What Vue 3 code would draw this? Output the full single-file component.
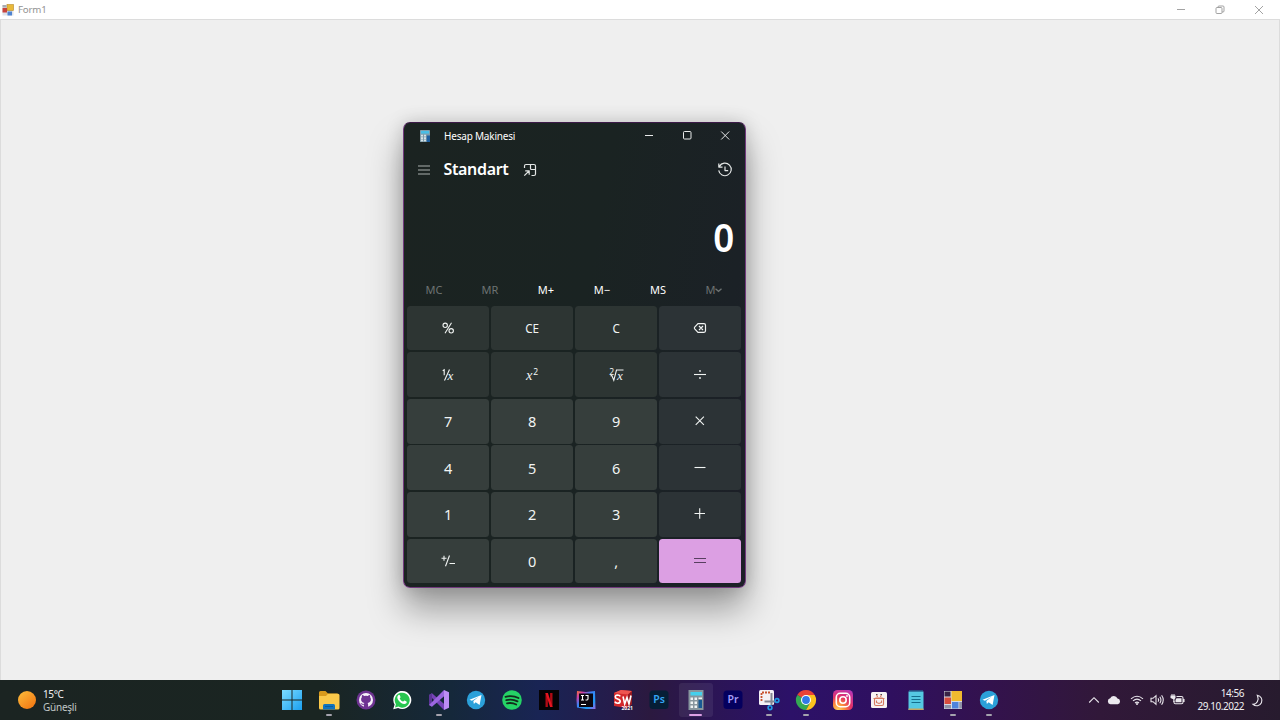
<script setup>
const memory = [
  { t: 'MC', off: true }, { t: 'MR', off: true }, { t: 'M+' },
  { t: 'M−' }, { t: 'MS' }, { t: 'M', off: true, chevron: true },
]
const keys = [
  { k: 'percent', c: 'fn' }, { t: 'CE', c: 'fn small' }, { t: 'C', c: 'fn small' }, { k: 'back', c: 'op' },
  { k: 'inv', c: 'fn' }, { k: 'sq', c: 'fn' }, { k: 'root', c: 'fn' }, { k: 'div', c: 'op' },
  { t: '7', c: 'num' }, { t: '8', c: 'num' }, { t: '9', c: 'num' }, { k: 'mul', c: 'op' },
  { t: '4', c: 'num' }, { t: '5', c: 'num' }, { t: '6', c: 'num' }, { k: 'sub', c: 'op' },
  { t: '1', c: 'num' }, { t: '2', c: 'num' }, { t: '3', c: 'num' }, { k: 'add', c: 'op' },
  { k: 'neg', c: 'num' }, { t: '0', c: 'num' }, { t: ',', c: 'num' }, { k: 'eq', c: 'eq' },
]
const apps = [
  { id: 'start' }, { id: 'files', run: true }, { id: 'github' }, { id: 'whatsapp' }, { id: 'vs', run: true },
  { id: 'telegram' }, { id: 'spotify' }, { id: 'netflix' }, { id: 'idea' }, { id: 'sw' }, { id: 'ps' },
  { id: 'calc', active: true }, { id: 'pr' }, { id: 'snip', run: true }, { id: 'chrome', run: true },
  { id: 'insta' }, { id: 'box' }, { id: 'notes' }, { id: 'form', run: true }, { id: 'telegram', run: true },
]
</script>

<template>
  <div class="screen">
    <header class="formbar">
      <svg class="formicon" width="12" height="12" viewBox="0 0 12 12">
        <rect x=".5" y="1" width="11" height="10.5" fill="#dfe3ea" />
        <rect x="5" y=".5" width="6.500" height="6" fill="#e9b93a" stroke="#b98c2c" stroke-width=".6" />
        <rect x=".5" y="4" width="4.500" height="4.500" fill="#c8433c" />
        <rect x="5.500" y="7.500" width="4.500" height="4" fill="#4f83d0" />
        <path d="M.5 1h4v2.500h-4z" fill="#a8abb2" />
      </svg>
      <span class="formname">Form1</span>
      <div class="formctl">
        <svg viewBox="0 0 12 12"><path d="M2 5.500h8" /></svg>
        <svg viewBox="0 0 12 12"><rect x="2" y="3.500" width="6" height="6" rx="1" /><path d="M4 3.500V3q0-1 1-1h4q1 0 1 1v4q0 1-1 1H8" /></svg>
        <svg viewBox="0 0 12 12"><path d="M2 2l8 8M10 2l-8 8" /></svg>
      </div>
    </header>

    <main class="form">
      <section class="calc">
        <div class="cbar">
          <svg class="cicon" width="10" height="12" viewBox="0 0 10 12">
            <rect width="10" height="12" rx=".6" fill="#7f9dab" /><rect x="1" y="1" width="8" height="2.600" fill="#48bfe6" />
            <path d="M1 4.800h2v1.800H1zM4 4.800h2v1.800H4zM1 7.200h2V9H1zM4 7.200h2V9H4zM1 9.600h2v1.600H1zM4 9.600h2v1.600H4z" fill="#d5e3e8" /><path d="M6.700 5.500H10V12H6.700z" fill="#1e609f" />
          </svg>
          <span>Hesap Makinesi</span>
          <div class="cctl">
            <svg viewBox="0 0 12 12"><path d="M2 5.500h8" /></svg>
            <svg viewBox="0 0 12 12"><rect x="2.500" y="1.500" width="7.500" height="7.500" rx="1" /></svg>
            <svg viewBox="0 0 12 12"><path d="M2.200 1.500l8 8M10.200 1.500l-8 8" /></svg>
          </div>
        </div>
        <div class="chead">
          <svg class="menu" width="14" height="12" viewBox="0 0 14 12"><path d="M1 2h12M1 6h12M1 10h12" /></svg>
          <h1>Standart</h1>
          <svg class="pin" width="14" height="14" viewBox="0 0 14 14"><path d="M1.500 5V3q0-1.500 1.500-1.500h8q1.500 0 1.500 1.500v8q0 1.500-1.500 1.500H8.500M7.500 1.500v4q0 1 1 1h4M1.300 12.700L6 8M2.200 7.800H6.200v4" /></svg>
          <svg class="hist" width="16" height="16" viewBox="0 0 16 16"><path d="M2.400 4.400A6.300 6.300 0 1 1 1.700 8.400M1.800 1.600v3.500h3.700M8 4.600v4h3.200" /></svg>
        </div>
        <div class="result"><span>0</span></div>
        <div class="memory">
          <span v-for="m in memory" :key="m.t + m.off" :class="{ off: m.off }">{{ m.t }}<svg v-if="m.chevron" width="7" height="6" viewBox="0 0 7 6"><path d="M.5 1.700l3 2.600L6.500 1.700" /></svg></span>
        </div>
        <div class="keys">
          <div v-for="(b, i) in keys" :key="i" class="key" :class="b.c">
            <template v-if="b.t">{{ b.t }}</template>
            <svg v-else-if="b.k === 'percent'" viewBox="0 0 20 20"><circle cx="7.200" cy="7.300" r="2.200" /><circle cx="13.200" cy="12.800" r="2.200" /><path d="M13.500 4.800L7 15.200" /></svg>
            <svg v-else-if="b.k === 'back'" viewBox="0 0 20 20"><path stroke-width="1.200" d="M8 5.700h6q1.500 0 1.500 1.500v5.600q0 1.500-1.500 1.500H8L4.700 10.800q-.7-.8 0-1.600zM9 8l4 4M13 8l-4 4" /></svg>
            <svg v-else-if="b.k === 'inv'" viewBox="0 0 20 20"><path d="M4.700 5.700L6.200 4.700v5.600M11.500 4.500L6.500 15.500" /><text x="9.500" y="15" class="math mid">x</text></svg>
            <svg v-else-if="b.k === 'sq'" viewBox="0 0 20 20"><text x="4" y="15" class="math big">x</text><text x="11.300" y="9.500" class="sup">2</text></svg>
            <svg v-else-if="b.k === 'root'" viewBox="0 0 20 20"><text x="3.300" y="9.500" class="sup">2</text><path d="M4.500 11l1.300-.5 2 4.800L10.500 5h7" /><text x="11" y="14.800" class="math mid">x</text></svg>
            <svg v-else-if="b.k === 'div'" viewBox="0 0 20 20"><path d="M4 9.500h12" /><circle cx="10" cy="6" r=".9" class="dot" /><circle cx="10" cy="13" r=".9" class="dot" /></svg>
            <svg v-else-if="b.k === 'mul'" viewBox="0 0 20 20"><path d="M5.700 5.700l8.200 8.200M13.900 5.700l-8.200 8.200" /></svg>
            <svg v-else-if="b.k === 'sub'" viewBox="0 0 20 20"><path d="M4.500 9.500h11" /></svg>
            <svg v-else-if="b.k === 'add'" viewBox="0 0 20 20"><path d="M4.500 9.500h10.500M9.700 4.300v10.500" /></svg>
            <svg v-else-if="b.k === 'neg'" viewBox="0 0 20 20"><path d="M3.500 7.200h5M6 4.700v5M11.500 4.500L7.500 15.200M11.500 12.500h5.500" /></svg>
            <svg v-else viewBox="0 0 20 20"><path d="M4 7.500h12M4 11.500h12" /></svg>
          </div>
        </div>
      </section>
    </main>

    <footer class="taskbar">
      <div class="weather">
        <i class="sun"></i>
        <div><p class="deg">15°C</p><p class="sky">Güneşli</p></div>
      </div>

      <nav class="apps">
        <div v-for="(a, i) in apps" :key="i" class="app" :class="{ run: a.run, active: a.active }">
          <svg v-if="a.id === 'start'" viewBox="0 0 24 24">
            <defs><linearGradient id="gw" x1="0" y1="0" x2="1" y2="1"><stop stop-color="#7ddcff" /><stop offset="1" stop-color="#1a9ff0" /></linearGradient></defs>
            <path fill="url(#gw)" d="M2 2h9.500v9.500H2zM12.500 2H22v9.500h-9.500zM2 12.500h9.500V22H2zM12.500 12.500H22V22h-9.500z" />
          </svg>
          <svg v-else-if="a.id === 'files'" viewBox="0 0 24 24">
            <path d="M2 4.500Q2 3 3.500 3h5L11 5.500h9q1.500 0 1.500 1.500v3H2z" fill="#d99a1c" />
            <path d="M2 8h7l2-2.200h10q1.500 0 1.500 1.500V20q0 1.500-1.500 1.500H3.500Q2 21.500 2 20z" fill="#fbc94a" />
            <path d="M6 21.500v-4q0-1.500 1.500-1.500h9q1.500 0 1.500 1.500v4z" fill="#1273bd" /><path d="M8 18.500h8" stroke="#0b5b9b" stroke-width="1" />
          </svg>
          <svg v-else-if="a.id === 'github'" viewBox="0 0 24 24">
            <circle cx="12" cy="12" r="9.500" fill="#6e3392" />
            <circle cx="12" cy="12" r="7" fill="#f7f2fa" />
            <path fill="#6e3392" d="M9.900 19v-2.200c-2.400.4-2.900-1.200-3.500-1.800 1.600-.2 1.700 1.400 3.500.8l.5-.9C7.900 14.500 7 13 7.100 11q.1-1.100.8-1.800-.3-1.100.2-2.200 1.100.1 2.200.9 1.700-.4 3.400 0 1.100-.8 2.200-.9.500 1.100.2 2.200.7.700.8 1.800c.1 2-.8 3.500-3.300 3.900q.5.700.5 1.600V19z" />
          </svg>
          <svg v-else-if="a.id === 'whatsapp'" viewBox="0 0 24 24">
            <path d="M3.200 21.300l1.400-4.700a9 9 0 1 1 3.500 3.300z" fill="#fff" /><path d="M5 19.400l.9-3.200a7.500 7.500 0 1 1 2.500 2.400z" fill="#28c650" />
            <path d="M8.300 7.200c.8-.7 1.300-.4 1.600.4l.6 1.400c.2.5-.5 1-.8 1.400.8 1.700 1.800 2.500 3.500 3.200.5-.4 1-1.300 1.500-1.100l1.700.9c.6.300.4 1.200-.1 1.800-2.100 2-6-.3-7.700-2.700C7 10.400 6.900 8.500 8.300 7.200z" fill="#fff" />
          </svg>
          <svg v-else-if="a.id === 'vs'" viewBox="0 0 24 24">
            <path d="M2 7l3-1.800L18.300 17 17 22z" fill="#7643b8" /><path d="M2 7v10l3 1.800V5.200z" fill="#5d3698" /><path d="M2 17l3 1.800L18.500 7 17 2z" fill="#9b66df" />
            <path d="M17 2l5 2.200v15.600L17 22z" fill="#bd8cf4" />
          </svg>
          <svg v-else-if="a.id === 'telegram'" viewBox="0 0 24 24">
            <circle cx="12" cy="12" r="9.200" fill="#2ba0d9" />
            <path d="M5.500 11.800L17.500 7 15.600 17l-4-2.800-1.700 1.900-.6-3.200 5.200-3.800-6.600 3.700z" fill="#fff" />
          </svg>
          <svg v-else-if="a.id === 'spotify'" viewBox="0 0 24 24">
            <circle cx="12" cy="12" r="9.800" fill="#25d366" /><path d="M5.500 8.800q7-2 13 1.200M6.300 12.200q6-1.500 11.200 1.200M7 15.400q5-1.200 9.200 1.100" fill="none" stroke="#142c1c" stroke-width="1.800" stroke-linecap="round" />
          </svg>
          <svg v-else-if="a.id === 'netflix'" viewBox="0 0 24 24">
            <path d="M2 2h20v20H2z" fill="#050305" /><path d="M8.500 5h2.400v14H8.500zM13.100 5h2.400v14h-2.400z" fill="#b00a14" /><path d="M8.500 5h2.400l4.600 14h-2.400z" fill="#e51520" />
          </svg>
          <svg v-else-if="a.id === 'idea'" viewBox="0 0 24 24">
            <defs><linearGradient id="gi" x1="0" y1="0" x2="1" y2="1"><stop stop-color="#f5792f" /><stop offset=".2" stop-color="#cf3fa5" /><stop offset=".42" stop-color="#3b82f6" /><stop offset=".75" stop-color="#1e9bf5" /><stop offset="1" stop-color="#9a62e0" /></linearGradient></defs>
            <path d="M3 3l9 1 9-1 .5 18H12l-9-1.500L2.500 12z" fill="url(#gi)" /><path d="M5 5.500h14v13.500H5z" fill="#0b0710" />
            <path d="M7 7.500h3M8.500 7.500v4.500M7 12h3M11.500 7.500H14v3.300q0 1.200-1 1.200H11.500M7 16.500h5" stroke="#fff" stroke-width="1.100" fill="none" />
          </svg>
          <svg v-else-if="a.id === 'sw'" viewBox="0 0 24 24">
            <path d="M3 5l7-3 11 1v13l-5 4-13-2z" fill="#d3292c" /><path d="M3 5l7-3 11 1-4 3.500z" fill="#ee5550" /><path d="M17 6.500L21 3v13l-5 4z" fill="#951b22" />
            <path d="M9.300 8.300Q8.500 7 6.500 7 4.300 7.200 4.300 9q0 1.400 2.500 2.100 2.400.6 2.400 2.300-.1 1.800-2.600 1.900Q4.500 15.200 3.800 13.700M12 8.500l1.700 7.500 2.300-6.500 2 6.500 2-8.500" fill="none" stroke="#fff" stroke-width="1.600" />
            <text x="10.500" y="21.900" class="swyear">2021</text>
          </svg>
          <svg v-else-if="a.id === 'ps'" viewBox="0 0 24 24"><rect x="2.500" y="2.500" width="19" height="18.500" rx="3.500" fill="#061e36" /><text x="12" y="15.300" class="adobe psc">Ps</text></svg>
          <svg v-else-if="a.id === 'calc'" viewBox="0 0 24 24">
            <path d="M4.500 2h15v20h-15z" fill="#87969e" /><path d="M6.500 4h11.500v3.500H6.500z" fill="#45d0ec" />
            <path d="M6.500 9.500H9V12H6.500zM10.500 9.500H13V12h-2.500zM14.500 9.500H18V11h-3.500zM6.500 13.500H9V16H6.500zM10.500 13.500H13V16h-2.500zM6.500 17.500H9V20H6.500zM10.500 17.500H13V20h-2.500z" fill="#eef3f4" /><path d="M14.500 12H18v8h-3.500z" fill="#185a94" />
          </svg>
          <svg v-else-if="a.id === 'pr'" viewBox="0 0 24 24"><rect x="2.500" y="2.500" width="19" height="18.500" rx="3.500" fill="#05005e" /><text x="12" y="15.300" class="adobe prc">Pr</text></svg>
          <svg v-else-if="a.id === 'snip'" viewBox="0 0 24 24">
            <rect x="2" y="2" width="15" height="15" rx="1.500" fill="#f4f1f5" /><path d="M4.500 13V4.500H13.500" stroke="#c9532f" stroke-width="1.800" stroke-dasharray="2 1" fill="none" />
            <path d="M14.500 5v12M7.500 13.500h10.500" stroke="#858792" stroke-width="2" /><g fill="none" stroke="#229be6" stroke-width="1.600"><circle cx="20" cy="12.500" r="1.900" /><circle cx="13" cy="19.700" r="1.900" /></g>
          </svg>
          <svg v-else-if="a.id === 'chrome'" viewBox="0 0 24 24">
            <path d="M12 12L3.300 7A10 10 0 0 1 20.700 7z" fill="#e94335" /><path d="M12 12l4.300 2.500L12 22A10 10 0 0 1 3.300 7z" fill="#34a853" />
            <path d="M12 7h8.700A10 10 0 0 1 12 22l4.300-7.500z" fill="#fcc31e" /><circle cx="12" cy="12" r="5" fill="#fff" /><circle cx="12" cy="12" r="3.900" fill="#3179e8" />
          </svg>
          <svg v-else-if="a.id === 'insta'" viewBox="0 0 24 24">
            <defs><radialGradient id="gn" cx=".25" cy="1" r="1.150"><stop stop-color="#ffd45e" /><stop offset=".3" stop-color="#f98a3b" /><stop offset=".58" stop-color="#e43066" /><stop offset="1" stop-color="#b637b9" /></radialGradient></defs>
            <rect x="2" y="2" width="20" height="20" rx="4.500" fill="url(#gn)" /><g fill="none" stroke="#fff" stroke-width="1.600"><rect x="5.300" y="5.300" width="13.400" height="13.400" rx="4" /><circle cx="12" cy="12" r="3.200" /></g><circle cx="16" cy="8" r=".9" fill="#fff" />
          </svg>
          <svg v-else-if="a.id === 'box'" viewBox="0 0 24 24">
            <rect x="4" y="4" width="16" height="16" rx="1.500" fill="#f7f3f3" /><g fill="none" stroke="#d77b61" stroke-width="1.100"><rect x="7.500" y="10" width="9" height="7.500" rx="1.500" /><path d="M6.500 10.500h11M9.500 12.500v2l2.500 1 2.500-1v-2M10.500 9L9.500 6.500M13.500 9l1-2.500" /><path d="M9 6.500h1.500M13.500 6.500H15" stroke="#4b4b52" /></g>
          </svg>
          <svg v-else-if="a.id === 'notes'" viewBox="0 0 24 24">
            <path d="M4.500 3.500h15V22h-15z" fill="#55c9e2" /><path d="M4.500 20.500h15V22h-15z" fill="#c6a65f" /><path d="M5.500 3h13" stroke="#2289a8" stroke-width="2" stroke-dasharray="1 1" /><path d="M7.500 8.500h9M7.500 11.500h9M7.500 14.500h9" stroke="#156f8d" stroke-width="1.200" />
          </svg>
          <svg v-else viewBox="0 0 24 24">
            <path d="M3 3h18v18H3z" fill="#d6dae4" /><path d="M3.500 3.500h6v5h-6z" fill="#392244" /><path d="M10.500 3H21v10H10.500z" fill="#f1b92f" /><path d="M3.500 9.500H10V16H3.500z" fill="#d84d3e" /><path d="M11 14h6.500v6.500H11z" fill="#4f83dd" /><path d="M3.500 17H10v3.500H3.500zM18.300 14H21v6.500h-2.700z" fill="#8f93a8" />
          </svg>
        </div>
      </nav>

      <div class="tray">
        <svg width="12" height="12" viewBox="0 0 12 12"><path d="M1.200 8.500L6 3.700l4.800 4.800" /></svg>
        <svg class="cloud" width="14" height="12" viewBox="0 0 14 12"><path class="solid" d="M3.500 10.200a3 3 0 0 1-.3-5.900A4 4 0 0 1 10.500 4.500a2.900 2.900 0 0 1 .3 5.700z" /></svg>
        <svg class="wifi" width="14" height="12" viewBox="0 0 14 12"><path d="M1 4.800q6-5.200 12 0M3 6.900q4-3.500 8 0M5 9q2-1.800 4 0" /><circle class="solid" cx="7" cy="10" r="1" /></svg>
        <svg class="vol" width="14" height="12" viewBox="0 0 14 12"><path d="M1 4.300h2L6 1.700v8.600L3 7.700H1zM8 4.300q1.300 1.700 0 3.400M9.800 2.800q2.300 3.200 0 6.400M11.600 1.300q3.300 4.700 0 9.400" /></svg>
        <svg class="bat" width="15" height="12" viewBox="0 0 15 12"><path d="M6.500 2.500h5q1.500 0 1.500 1.500v4.300q0 1.500-1.500 1.500h-6Q4 9.800 4 8.300V7M14 5v3" /><path class="solid" d="M6.500 4.300h5v4h-6V6zM.5 1.500h1V0h1v1.500h1V0h1v1.500H5.500V4L4.500 5.200V8h-1.200V5.200L.5 4z" /></svg>
        <div class="clock"><p>14:56</p><p>29.10.2022</p></div>
        <svg class="moon" width="13" height="13" viewBox="0 0 13 13"><path d="M6.300 1.200A5.300 5.300 0 1 1 2 10.300C6 10.300 8.300 5.800 6.300 1.200z" /></svg>
      </div>
    </footer>
  </div>
</template>

<style>
body { margin: 0; overflow: hidden; }
</style>

<style scoped>
* { box-sizing: border-box; }
p, h1 { margin: 0; }
.screen { width: 1280px; height: 720px; display: flex; flex-direction: column; overflow: hidden; font-family: "Noto Sans", "Open Sans", sans-serif; }
svg { flex: none; display: block; fill: none; }
.formbar { height: 19px; background: #fff; display: flex; align-items: center; padding-left: 2px; flex: none; }
.formname { margin-left: 4px; font-size: 9.700px; letter-spacing: -.2px; color: #929292; line-height: 19px; }
.formctl { margin-left: auto; display: flex; gap: 27px; padding-right: 15.500px; }
.formctl svg { width: 12px; height: 12px; stroke: #999; stroke-width: .9; }
.form { flex: 1; background: #efefef; border: 1px solid #dcdcdc; border-bottom: 0; padding: 102px 0 0 402px; }
.calc { width: 342.500px; height: 465.500px; border: 1px solid #71397d; border-top-color: #3c1a48; border-radius: 7px; background: linear-gradient(100deg, #1b2321 0%, #1a2322 50%, #1b2126 85%, #1d1f28 100%); box-shadow: 0 22px 34px rgba(0,0,0,.34), 0 0 18px rgba(0,0,0,.17); display: flex; flex-direction: column; color: #fff; padding: 0 3px; }
.cbar { height: 26px; display: flex; align-items: center; padding-left: 13px; font-size: 10px; flex: none; }
.cbar span { margin-left: 14px; letter-spacing: -.2px; }
.cctl { margin-left: auto; display: flex; gap: 26px; padding-right: 10.500px; }
.cctl svg { width: 12px; height: 12px; stroke: #e8eaea; stroke-width: 1; }
.chead { height: 41px; display: flex; align-items: center; padding: 0 8.500px 0 10px; flex: none; }
.chead svg { stroke: #e3e6e5; stroke-width: 1.200; stroke-linejoin: round; }
.chead .menu { stroke: #aab0ae; stroke-width: 1; position: relative; top: .5px; }
h1 { margin-left: 12.500px; font-size: 16px; line-height: 22px; font-weight: 600; letter-spacing: -.35px; width: 67px; white-space: nowrap; position: relative; top: -.7px; }
.chead .pin { margin-left: 12.500px; }
.hist { margin-left: auto; }
.result { height: 84px; text-align: right; font-size: 39px; line-height: 94px; font-weight: 600; padding-right: 7.500px; flex: none; }
.result span { display: inline-block; transform: scaleX(.94); transform-origin: right; }
.memory { height: 31px; display: grid; grid-template-columns: repeat(6, 56px); align-items: center; text-align: center; font-size: 11px; line-height: 31px; flex: none; margin-left: -1px; }
.memory span { display: flex; justify-content: center; align-items: center; }
.memory .off { color: #6d7373; }
.memory svg { stroke: #6d7373; stroke-width: 1.300; }
.keys { height: 278px; display: grid; grid-template-columns: repeat(4, 1fr); grid-template-rows: repeat(6, 1fr); gap: 1.700px; margin-top: .5px; margin-right: .3px; }
.key { border-radius: 3.500px; display: flex; align-items: center; justify-content: center; font-size: 14.500px; color: #f1f4f3; }
.key svg { width: 20px; height: 20px; stroke: currentColor; stroke-width: 1.100; overflow: visible; }
.num { background: #363e3c; }
.fn { background: #2d3533; }
.op { background: #2c3336; }
.small { font-size: 11.700px; }
.eq { background: #dc9fe3; color: #583e60; }
.math { font: italic 11px "Liberation Serif", serif; fill: currentColor; stroke: none; }
.mid { font-size: 13px; }
.big { font-size: 14.500px; }
.sup { font-size: 8.500px; fill: currentColor; stroke: none; }
.dot { fill: currentColor; stroke: none; }

.taskbar { height: 40px; flex: none; display: flex; background: linear-gradient(90deg, #1b2422 0, #1a2522 320px, #15283a 450px, #192454 540px, #251c4b 610px, #2b193f 650px, #2b1554 710px, #2c1168 790px, #2f105f 890px, #33124d 990px, #311839 1100px, #271b2e 1280px); color: #f0f0f2; }
.weather { width: 274px; display: flex; align-items: center; padding-left: 18px; flex: none; font-size: 10px; line-height: 13px; }
.weather > div { margin-left: 7px; padding-top: 1px; }
.deg { letter-spacing: -.4px; }
.sky { color: #c1c7c6; letter-spacing: -.25px; }
.sun { width: 18px; height: 18px; border-radius: 50%; background: linear-gradient(140deg, #fbbd3c, #f2700e); }
.apps { display: flex; align-items: center; flex: none; }
.app { width: 36.700px; height: 40px; display: flex; align-items: center; justify-content: center; position: relative; }
.app svg { width: 24px; height: 24px; position: relative; }
.app.run::after { content: ""; position: absolute; width: 6px; height: 2px; bottom: 4.500px; left: 15.300px; border-radius: 1px; background: #a5a3ad; }
.app.active::before { content: ""; position: absolute; inset: 3px 1.500px 3px; border-radius: 3px; background: #fff; opacity: .07; }
.app.active::after { content: ""; position: absolute; width: 13px; height: 2.500px; bottom: 4px; left: 11.800px; border-radius: 1.500px; background: #dda0e6; }
.swyear { font-weight: 700; font-size: 5px; fill: #fff; }
.adobe { font-weight: 600; font-size: 10.500px; text-anchor: middle; }
.psc { fill: #35a6f5; }
.prc { fill: #a39bf7; }
.tray { margin-left: auto; display: flex; align-items: center; padding-right: 16px; }
.tray svg { stroke: #e9e6ec; stroke-width: 1.100; }
.tray .solid { fill: #ece9ee; stroke: none; }
.cloud { margin-left: 7px; }
.wifi { margin-left: 9px; }
.vol { margin-left: 6px; }
.bat { margin-left: 6px; }
.clock { width: 52px; margin-left: 7px; text-align: right; font-size: 10px; line-height: 13px; letter-spacing: -.45px; white-space: nowrap; display: flex; flex-direction: column; align-items: flex-end; }
.moon { margin-left: 7px; }
</style>
